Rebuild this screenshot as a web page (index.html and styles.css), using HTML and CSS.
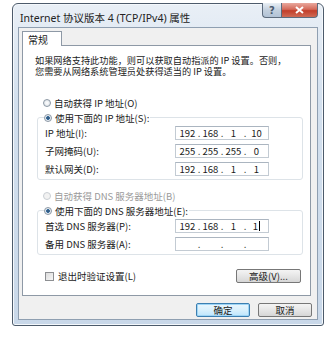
FILE: index.html
```html
<!DOCTYPE html>
<html lang="zh-CN">
<head>
    <meta charset="UTF-8">
    <title>Internet 协议版本 4 (TCP/IPv4) 属性</title>
    <link rel="stylesheet" href="styles.css">
</head>
<body>

    <div class="window">
        <div class="title">Internet 协议版本 4 (TCP/IPv4) 属性</div>
        <div class="caption-btns">
            <span class="cap-help">?</span>
            <span class="cap-close">
                <svg width="9" height="8" viewBox="0 0 9 8"><path d="M1 1 L8 7 M8 1 L1 7" stroke="#fff" stroke-width="2"/></svg>
            </span>
        </div>

        <div class="client">
            <div class="tab">常规</div>
            <div class="panel">
                <p class="desc">如果网络支持此功能，则可以获取自动指派的 IP 设置。否则，</p>
                <p class="desc">您需要从网络系统管理员处获得适当的 IP 设置。</p>

                <div class="radio-row first"><span class="radio"></span>自动获得 IP 地址(O)</div>
                <fieldset class="group">
                    <legend><span class="radio checked"></span>使用下面的 IP 地址(S):</legend>
                    <div class="row">
                        <span class="lbl">IP 地址(I):</span>
                        <div class="ipbox"><span>192</span><i>.</i><span>168</span><i>.</i><span>1</span><i>.</i><span>10</span></div>
                    </div>
                    <div class="row">
                        <span class="lbl">子网掩码(U):</span>
                        <div class="ipbox"><span>255</span><i>.</i><span>255</span><i>.</i><span>255</span><i>.</i><span>0</span></div>
                    </div>
                    <div class="row">
                        <span class="lbl">默认网关(D):</span>
                        <div class="ipbox"><span>192</span><i>.</i><span>168</span><i>.</i><span>1</span><i>.</i><span>1</span></div>
                    </div>
                </fieldset>

                <div class="radio-row disabled second"><span class="radio"></span>自动获得 DNS 服务器地址(B)</div>
                <fieldset class="group">
                    <legend><span class="radio checked"></span>使用下面的 DNS 服务器地址(E):</legend>
                    <div class="row">
                        <span class="lbl">首选 DNS 服务器(P):</span>
                        <div class="ipbox"><span>192</span><i>.</i><span>168</span><i>.</i><span>1</span><i>.</i><span>1<b class="caret"></b></span></div>
                    </div>
                    <div class="row">
                        <span class="lbl">备用 DNS 服务器(A):</span>
                        <div class="ipbox"><span></span><i>.</i><span></span><i>.</i><span></span><i>.</i><span></span></div>
                    </div>
                </fieldset>

                <div class="check-row">
                    <label class="check"><span class="box"></span>退出时验证设置(L)</label>
                    <button class="btn adv">高级(V)...</button>
                </div>
            </div>

            <div class="actions">
                <button class="btn default">确定</button>
                <button class="btn">取消</button>
            </div>
        </div>
    </div>

</body>
</html>
```

FILE: styles.css
```css
body {
    margin: 0;
    background-color: #ffffff;
    font-family: "Noto Sans CJK SC", "Noto Sans", sans-serif;
    font-size: 9.5px;
    color: #1a1a1a;
}

.window {
    position: relative;
    box-sizing: border-box;
    width: 312px;
    height: 323px;
    margin: 3px 0 0 12px;
    padding: 23px 5px 5px 5px;
    border: 1px solid #4d5b6b;
    border-radius: 6px 6px 3px 3px;
    background: linear-gradient(#e9eff6, #d3e0ee 30%, #c9d8e9);
    box-shadow: inset 0 0 0 1px #f4f8fc;
}

.title {
    position: absolute;
    top: 6px;
    left: 7px;
    font-family: "Noto Sans", "Noto Sans CJK SC", sans-serif;
    font-size: 10.5px;
    color: #222;
}

.caption-btns {
    position: absolute;
    top: -1px;
    right: 5px;
    display: flex;
}

.cap-help, .cap-close {
    display: flex;
    align-items: center;
    justify-content: center;
    height: 14px;
    border: 1px solid #5c6b7d;
    border-top: none;
}

.cap-help {
    width: 18px;
    border-radius: 0 0 0 4px;
    border-right: none;
    background: linear-gradient(#e9eff5, #c3d0de 50%, #b1c2d5);
    font-family: "DejaVu Sans", sans-serif;
    font-size: 10px;
    font-weight: bold;
    color: #4a5a6e;
}

.cap-close {
    width: 35px;
    border-radius: 0 0 4px 0;
    background: linear-gradient(#e9a89d, #d46a5a 45%, #c23e2a 55%, #cf6b55);
}

.client {
    box-sizing: border-box;
    height: 100%;
    padding: 3px 5px 0 3px;
    border: 1px solid #8f9fb1;
    background-color: #f0f0f0;
}

.tab {
    position: relative;
    width: 40px;
    height: 15px;
    box-sizing: border-box;
    margin-bottom: -1px;
    padding: 1px 0 0 5px;
    border: 1px solid #8e99a6;
    border-bottom: none;
    background-color: #ffffff;
    font-size: 10px;
    line-height: 13px;
    z-index: 1;
}

.panel {
    box-sizing: border-box;
    width: 289px;
    height: 251px;
    padding: 9px 7px 0 12px;
    border: 1px solid #8e99a6;
    background-color: #ffffff;
}

.desc {
    height: 11px;
    margin: 0;
    line-height: 11px;
    white-space: nowrap;
    font-size: 9.2px;
}

.radio-row {
    display: flex;
    align-items: center;
    height: 14px;
    margin-left: 8px;
}

.radio-row.first {
    margin-top: 19px;
}

.radio-row.second {
    margin-top: 9px;
}

.radio-row.disabled {
    color: #9a9a9a;
}

.radio {
    display: inline-block;
    box-sizing: border-box;
    width: 8px;
    height: 8px;
    margin-right: 3px;
    border: 1px solid #8b97a4;
    border-radius: 50%;
    background: radial-gradient(#ffffff, #d7dde3);
}

.disabled .radio {
    border-color: #c9ced3;
    background: #f2f2f2;
}

.radio.checked {
    background: radial-gradient(#2e4d6c 0, #3d6f9e 1.6px, #e8eef4 2.2px);
}

.group {
    box-sizing: border-box;
    width: 266px;
    margin: 1px 0 0 2px;
    padding: 0 7px 1px 7px;
    border: 1px solid #dde3e8;
    border-radius: 3px;
}

.group legend {
    display: flex;
    align-items: center;
    height: 13px;
    margin-left: -1px;
    padding: 0 1px 0 0;
}

.row {
    display: flex;
    align-items: center;
    height: 18px;
}

.lbl {
    width: 130px;
}

.ipbox {
    display: flex;
    box-sizing: border-box;
    width: 94px;
    height: 14px;
    padding-left: 2px;
    align-items: center;
    border: 1px solid #c3cbd3;
    border-top-color: #abb5c0;
    background-color: #ffffff;
}

.ipbox span {
    width: 19px;
    text-align: center;
}

.ipbox i {
    width: 4px;
    font-style: normal;
    text-align: center;
}

.caret {
    display: inline-block;
    width: 1px;
    height: 10px;
    margin-left: 1px;
    vertical-align: -1px;
    background-color: #000;
}

.check-row {
    display: flex;
    align-items: center;
    justify-content: space-between;
    width: 266px;
    margin: 14px 0 0 2px;
    padding: 0 2px 0 8px;
    box-sizing: border-box;
}

.check {
    display: flex;
    align-items: center;
}

.box {
    display: inline-block;
    box-sizing: border-box;
    width: 9px;
    height: 9px;
    margin-right: 4px;
    border: 1px solid #8d8f92;
    background: linear-gradient(135deg, #dcdcdc, #f6f6f6);
}

.btn {
    box-sizing: border-box;
    height: 14px;
    padding: 0;
    border: 1px solid #777;
    border-radius: 2px;
    background: linear-gradient(#f4f4f4, #e6e6e6 50%, #d6d6d6);
    font-family: "Noto Sans CJK SC", "Noto Sans", sans-serif;
    font-size: 9.5px;
    line-height: 12px;
    color: #1a1a1a;
}

.adv {
    width: 65px;
}

.actions {
    display: flex;
    justify-content: flex-end;
    gap: 8px;
    margin-top: 7px;
}

.actions .btn {
    width: 54px;
}

.btn.default {
    border-color: #3c7fb1;
    background: linear-gradient(#eaf6fd, #d9f0fc 50%, #bee6fd);
    box-shadow: inset 0 0 0 1px #9fd5f5;
}
```
